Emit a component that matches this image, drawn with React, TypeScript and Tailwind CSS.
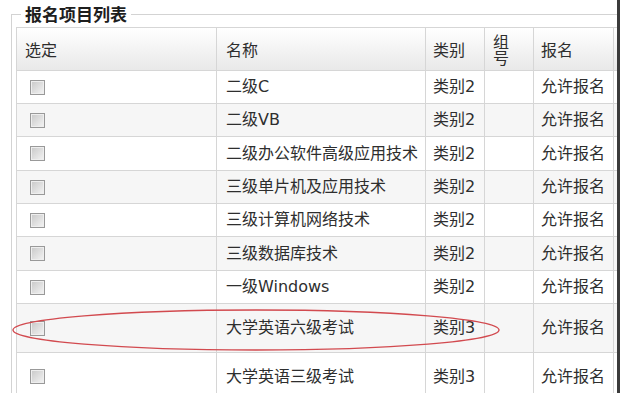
import React from 'react'

interface Item {
  name: string
  category: string
  group: string
  status: string
}

const items: Item[] = [
  { name: '二级C', category: '类别2', group: '', status: '允许报名' },
  { name: '二级VB', category: '类别2', group: '', status: '允许报名' },
  { name: '二级办公软件高级应用技术', category: '类别2', group: '', status: '允许报名' },
  { name: '三级单片机及应用技术', category: '类别2', group: '', status: '允许报名' },
  { name: '三级计算机网络技术', category: '类别2', group: '', status: '允许报名' },
  { name: '三级数据库技术', category: '类别2', group: '', status: '允许报名' },
  { name: '一级Windows', category: '类别2', group: '', status: '允许报名' },
  { name: '大学英语六级考试', category: '类别3', group: '', status: '允许报名' },
  { name: '大学英语三级考试', category: '类别3', group: '', status: '允许报名' },
]

const rowHeights = ['h-[33px]', 'h-[33px]', 'h-[34px]', 'h-[33px]', 'h-[33px]', 'h-[34px]', 'h-[33px]', 'h-[49px]', 'h-[48px]']

function Checkbox() {
  return (
    <input
      type="checkbox"
      className="appearance-none block ml-[5px] w-[15px] h-[15px] border border-[#999] bg-linear-to-br from-[#c8c8c8] to-[#f4f4f4] shadow-[inset_0_0_0_1px_#eeeeee]"
    />
  )
}

export default function App() {
  return (
    <div className="relative w-[620px] h-[393px] overflow-hidden bg-white flex font-['DejaVu_Sans','Noto_Sans_CJK_SC',sans-serif] text-[16px] text-[#2e2e2e]">
      <div className="w-[617px] shrink-0 overflow-hidden pl-[11px]">
        <fieldset className="mt-[4px] min-w-0 h-[420px] border border-r-0 border-b-0 border-[#d3d3d3]">
          <legend className="ml-[9px] px-[4px] text-[17px] leading-[20px] font-bold text-[#1e1e1e] font-['Noto_Sans_CJK_SC',sans-serif]">
            报名项目列表
          </legend>
          <table className="ml-[4px] mt-[3px] w-[660px] table-fixed border-collapse">
            <colgroup>
              <col className="w-[200px]" />
              <col className="w-[209px]" />
              <col className="w-[59px]" />
              <col className="w-[49px]" />
              <col className="w-[80px]" />
              <col className="w-[63px]" />
            </colgroup>
            <thead>
              <tr className="h-[43px] bg-linear-to-b from-white to-[#e8e8e8] font-['Noto_Sans_CJK_SC',sans-serif] font-normal">
                <th className="border border-[#d6d6d6] pl-[8px] text-left font-normal">选定</th>
                <th className="border border-[#d6d6d6] pl-[9px] text-left font-normal">名称</th>
                <th className="border border-[#d6d6d6] pl-[7px] text-left font-normal">类别</th>
                <th className="border border-[#d6d6d6] pl-[8px] text-left font-normal">
                  <span className="block w-[16px] leading-[16px]">组号</span>
                </th>
                <th className="border border-[#d6d6d6] pl-[7px] text-left font-normal">报名</th>
                <th className="border border-[#d6d6d6]" />
              </tr>
            </thead>
            <tbody>
              {items.map((item, i) => (
                <tr key={item.name} className={`${rowHeights[i]} ${i % 2 === 1 ? 'bg-[#f6f6f6]' : 'bg-white'}`}>
                  <td className="border border-[#d6d6d6] pl-[8px]">
                    <Checkbox />
                  </td>
                  <td className="border border-[#d6d6d6] pl-[9px] whitespace-nowrap">{item.name}</td>
                  <td className="border border-[#d6d6d6] pl-[7px] whitespace-nowrap">{item.category}</td>
                  <td className="border border-[#d6d6d6] pl-[8px]">{item.group}</td>
                  <td className="border border-[#d6d6d6] pl-[7px] whitespace-nowrap">{item.status}</td>
                  <td className="border border-[#d6d6d6]" />
                </tr>
              ))}
            </tbody>
          </table>
        </fieldset>
      </div>
      <div className="w-[3px] shrink-0 bg-[#3b3b3b]" />

      {/* hand-drawn highlight round the 六级 row */}
      <svg className="absolute left-0 top-0 pointer-events-none" width="620" height="393">
        <ellipse cx="256" cy="330" rx="243" ry="20" fill="none" stroke="#d24a4f" strokeWidth="1.4" />
      </svg>
    </div>
  )
}
